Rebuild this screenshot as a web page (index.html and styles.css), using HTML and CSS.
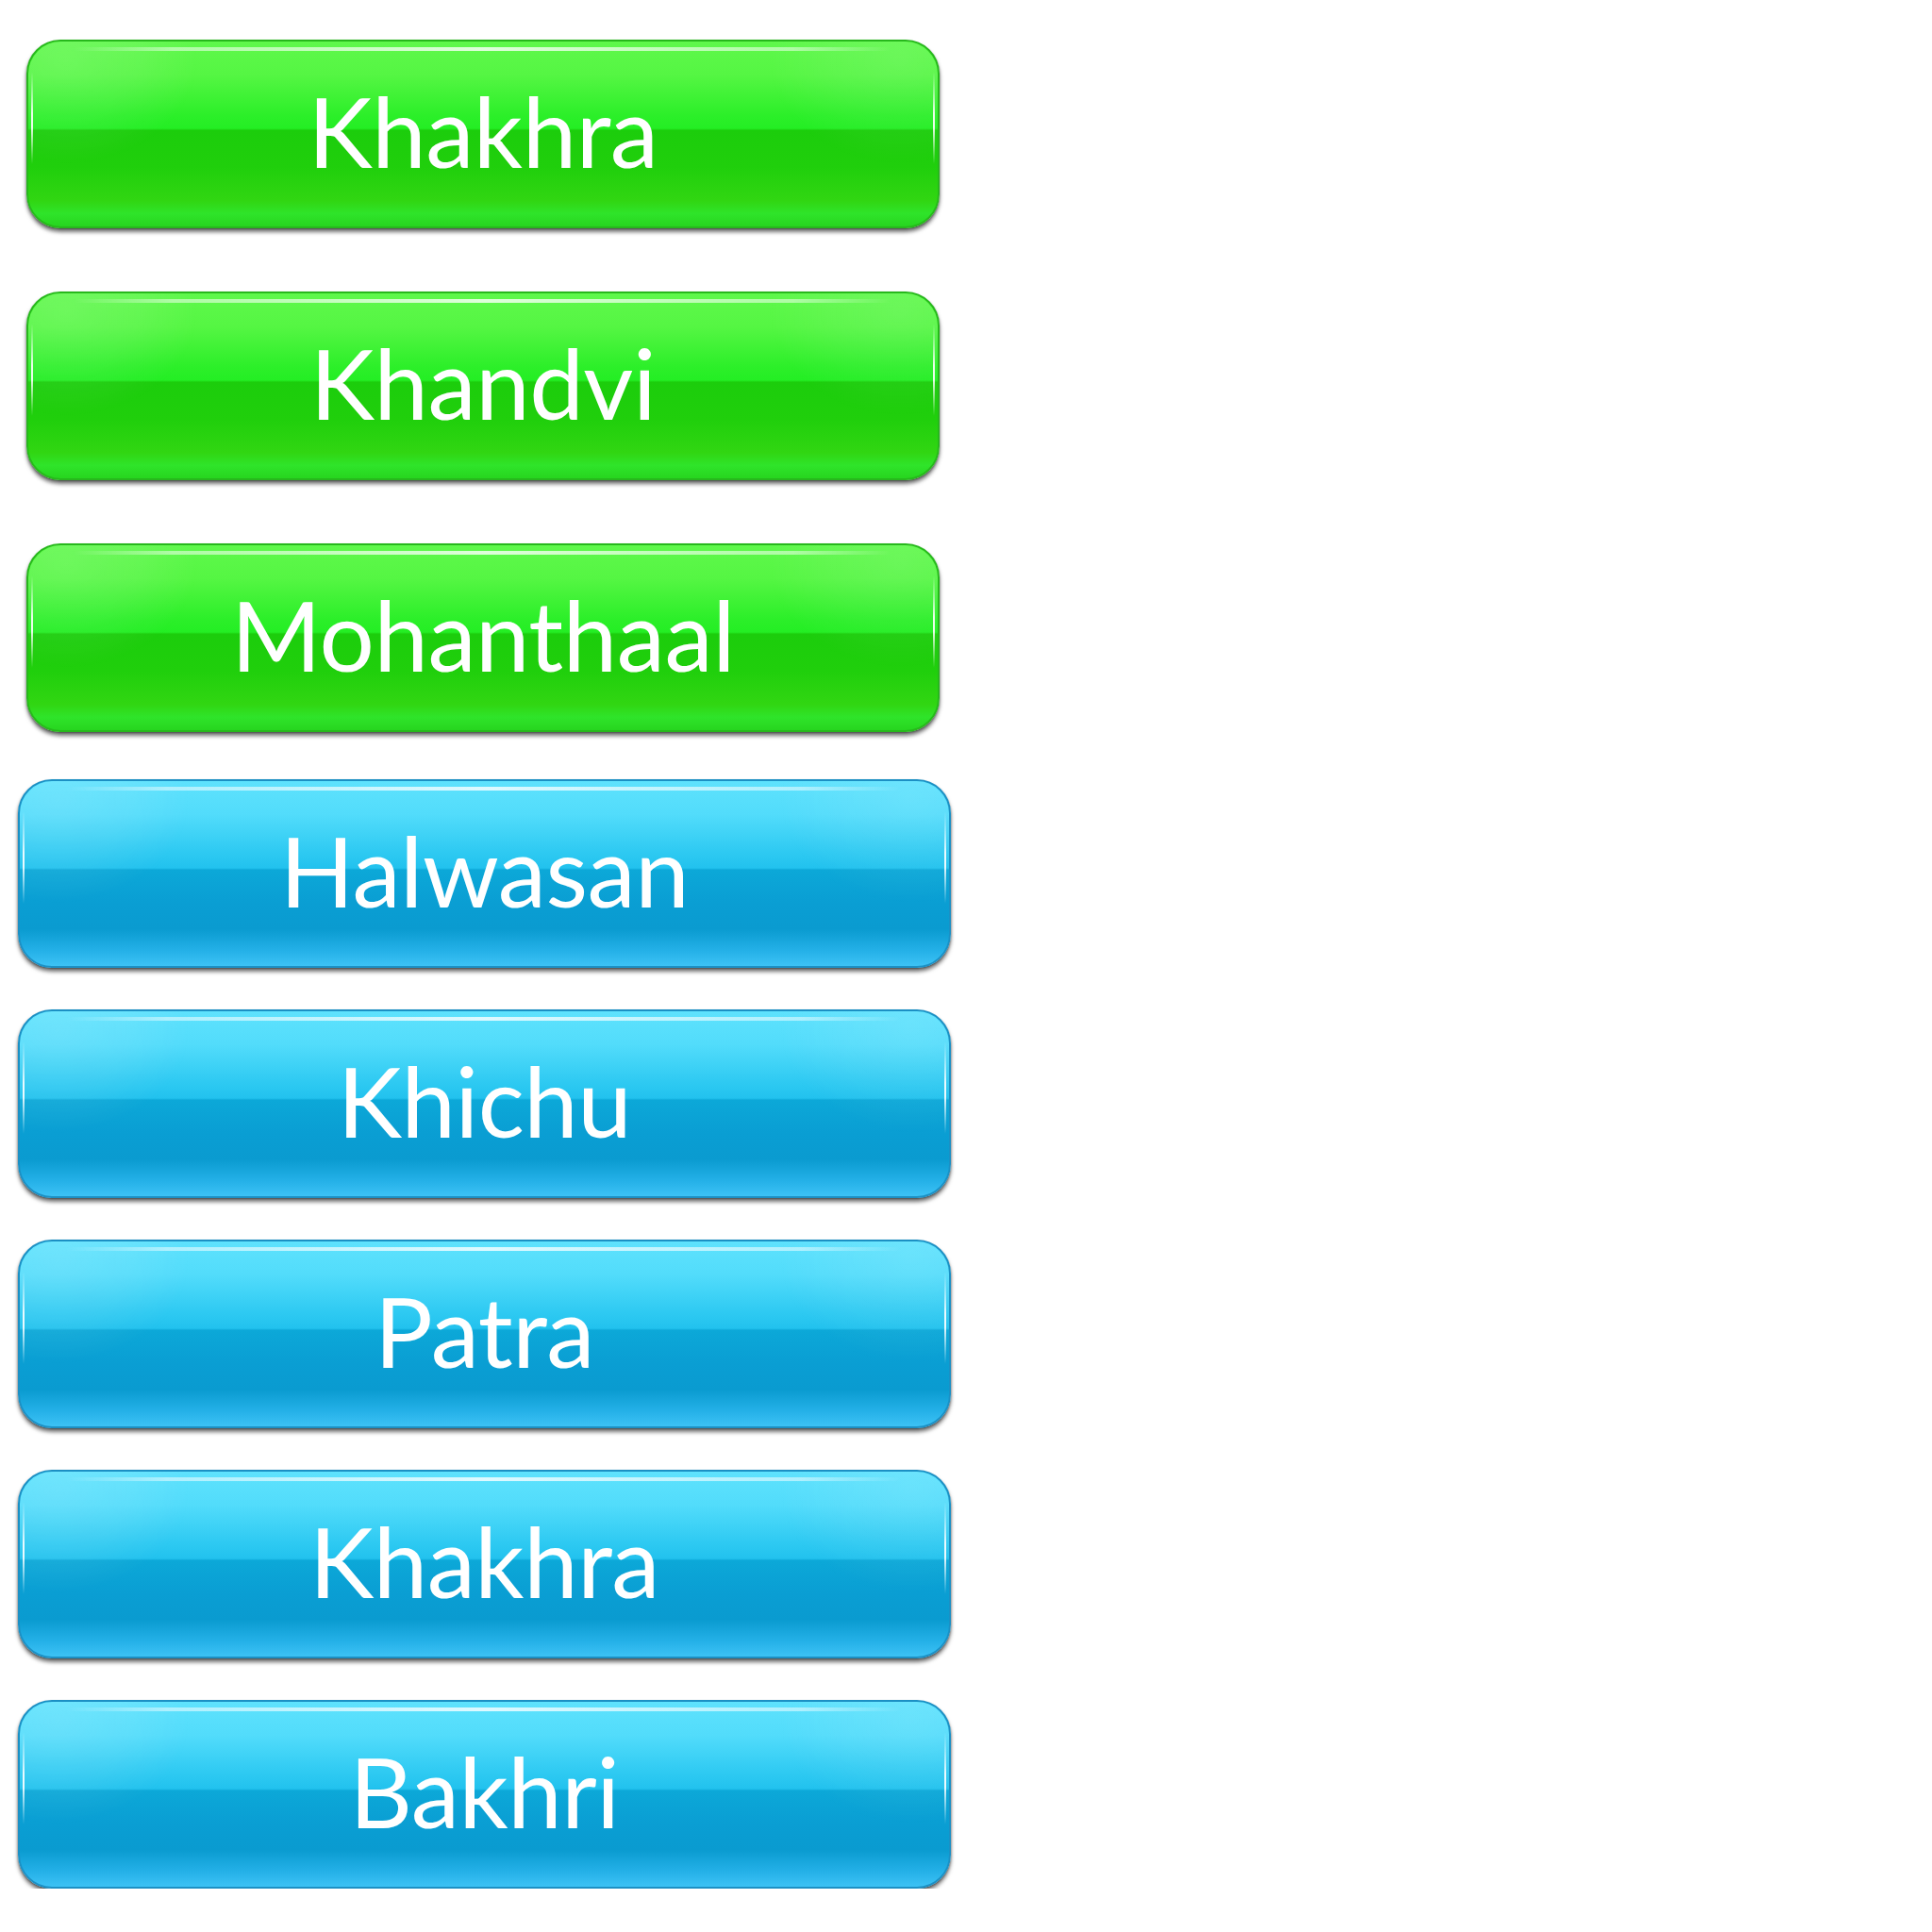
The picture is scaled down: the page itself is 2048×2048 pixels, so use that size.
FILE: index.html
```html
<!DOCTYPE html>
<html lang="en">
<head>
<meta charset="utf-8">
<title>Gujarati snacks</title>
<link rel="stylesheet" href="styles.css">
</head>
<body>
<main class="page">
  <div class="group group-green">
    <div class="btn green"><span class="label">Khakhra</span></div>
    <div class="btn green"><span class="label">Khandvi</span></div>
    <div class="btn green"><span class="label">Mohanthaal</span></div>
  </div>
  <div class="group group-blue">
    <div class="btn blue"><span class="label">Halwasan</span></div>
    <div class="btn blue"><span class="label">Khichu</span></div>
    <div class="btn blue"><span class="label">Patra</span></div>
    <div class="btn blue"><span class="label">Khakhra</span></div>
    <div class="btn blue"><span class="label">Bakhri</span></div>
  </div>
</main>
</body>
</html>
```
FILE: styles.css
```css
html, body {
  margin: 0;
  padding: 0;
  background: #ffffff;
}

.page {
  display: flex;
  flex-direction: column;
  padding-top: 42px;
  gap: 50px;
}

.group {
  display: flex;
  flex-direction: column;
}

.group-green {
  padding-left: 28px;
  width: 968px;
  gap: 67px;
}

.group-blue {
  padding-left: 19px;
  width: 989px;
  gap: 44px;
}

.btn {
  position: relative;
  box-sizing: border-box;
  height: 200px;
  padding-bottom: 8px;
  border-radius: 36px;
  display: flex;
  align-items: center;
  justify-content: center;
  color: #ffffff;
  font-family: "Lato", "Open Sans", sans-serif;
  font-size: 103px;
  line-height: 1;
  box-shadow: 0 4px 4px rgba(0, 0, 0, 0.55), 0 1px 2px rgba(0, 0, 0, 0.35);
}

.label {
  position: relative;
  z-index: 2;
  letter-spacing: -0.5px;
}

.green {
  border: 2px solid #27b81c;
  background: linear-gradient(to bottom,
    #5ff84b 0%,
    #55f643 18%,
    #2cef29 40%,
    #24ee24 47%,
    #1ccd0c 48%,
    #20cf0c 68%,
    #31d612 86%,
    #2fe42a 93%,
    #27d51f 100%);
}

.blue {
  border: 2px solid #1c90c4;
  background: linear-gradient(to bottom,
    #5ee2fd 0%,
    #52dcfb 18%,
    #2fcaf2 38%,
    #22c2ee 47%,
    #0ca8d8 48%,
    #0a9ed3 66%,
    #0a9bd0 80%,
    #25b1e8 92%,
    #3dc2f5 100%);
}

.btn::before {
  content: "";
  position: absolute;
  inset: 0;
  border-radius: inherit;
  z-index: 1;
  background:
    linear-gradient(to right, rgba(255,255,255,0) 0%, rgba(255,255,255,0.5) 12%, rgba(255,255,255,0.8) 50%, rgba(255,255,255,0.5) 88%, rgba(255,255,255,0) 100%) center 6px / 90% 4px no-repeat,
    linear-gradient(to bottom, rgba(255,255,255,0) 0%, rgba(255,255,255,0.9) 45%, rgba(255,255,255,0.9) 60%, rgba(255,255,255,0) 100%) left 3px top 33% / 2px 50% no-repeat,
    linear-gradient(to bottom, rgba(255,255,255,0) 0%, rgba(255,255,255,0.9) 45%, rgba(255,255,255,0.9) 60%, rgba(255,255,255,0) 100%) right 3px top 33% / 2px 50% no-repeat;
}

.btn::after {
  content: "";
  position: absolute;
  inset: 0;
  border-radius: inherit;
  z-index: 0;
  background:
    radial-gradient(ellipse 140px 110px at 40px 20px, rgba(255,255,255,0.12) 0%, rgba(255,255,255,0.07) 55%, rgba(255,255,255,0) 100%),
    radial-gradient(ellipse 140px 110px at calc(100% - 40px) 20px, rgba(255,255,255,0.10) 0%, rgba(255,255,255,0.05) 55%, rgba(255,255,255,0) 100%);
}
```
